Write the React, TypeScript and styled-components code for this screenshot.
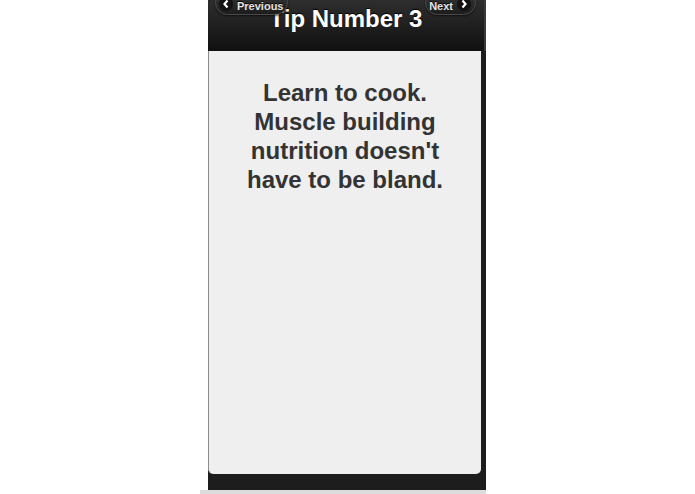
import React from 'react';
import styled, { createGlobalStyle } from 'styled-components';

const Global = createGlobalStyle`
  html, body {
    margin: 0;
    padding: 0;
    background: #ffffff;
    font-family: "Liberation Sans", Arial, sans-serif;
  }
`;

const Page = styled.div`
  width: 695px;
  height: 494px;
  overflow: hidden;
  background: #ffffff;
`;

const Frame = styled.div`
  margin-left: 208px;
  width: 278px;
  background: #1d1d1d;
  display: flex;
  flex-direction: column;
  padding-bottom: 16px;
`;

const Header = styled.header`
  position: relative;
  height: 51px;
  box-sizing: border-box;
  padding-top: 5px;
  background: linear-gradient(#2e2e2e, #101010);
  border-right: 2px solid #3a3a3a;
  overflow: hidden;
`;

const Title = styled.h1`
  margin: 0;
  text-align: center;
  font-size: 24px;
  line-height: 28px;
  font-weight: bold;
  color: #ffffff;
  text-shadow: 0 -1px 1px #000;
`;

const NavButton = styled.div<{ side: 'left' | 'right' }>`
  position: absolute;
  top: -10px;
  ${(p) => (p.side === 'left' ? 'left: 7px;' : 'right: 8px;')}
  height: 25px;
  box-sizing: border-box;
  padding: 9px 4px 0 3px;
  display: flex;
  align-items: flex-start;
  gap: 4px;
  border: 1px solid #4a4a4a;
  border-radius: 14px;
  background: linear-gradient(#3a3a3a, #1c1c1c);
  box-shadow: 0 1px 2px rgba(0, 0, 0, 0.6);
  color: #e6e6e6;
  font-size: 11px;
  font-weight: bold;
  line-height: 12px;
  text-shadow: 0 -1px 0 #000;
`;

const Chevron = styled.span`
  width: 14px;
  height: 14px;
  margin-top: -3px;
  border-radius: 50%;
  background: #121212;
  display: flex;
  align-items: center;
  justify-content: center;
`;

const Content = styled.main`
  height: 423px;
  margin-right: 5px;
  box-sizing: border-box;
  padding: 27px 26px 0 26px;
  background: #efefef;
  border-left: 1px solid #8c8c8c;
  border-radius: 0 0 5px 5px;
`;

const Tip = styled.p`
  margin: 0;
  text-align: center;
  font-size: 24px;
  line-height: 29px;
  font-weight: bold;
  color: #333333;
`;

const Floor = styled.div`
  margin-left: 200px;
  width: 286px;
  height: 4px;
  background: #dcdcdc;
`;

const Arrow = ({ dir }: { dir: 'left' | 'right' }) => (
  <Chevron>
    <svg width="10" height="10" viewBox="0 0 10 10">
      <path
        d={dir === 'left' ? 'M6.5 1.5 L3.5 5 L6.5 8.5' : 'M3.5 1.5 L6.5 5 L3.5 8.5'}
        stroke="#ffffff"
        strokeWidth="2.2"
        fill="none"
      />
    </svg>
  </Chevron>
);

export default function App() {
  return (
    <Page>
      <Global />
      <Frame>
        <Header>
          <Title>Tip Number 3</Title>
          <NavButton side="left">
            <Arrow dir="left" />
            <span>Previous</span>
          </NavButton>
          <NavButton side="right">
            <span>Next</span>
            <Arrow dir="right" />
          </NavButton>
        </Header>
        <Content>
          <Tip>Learn to cook. Muscle building nutrition doesn't have to be bland.</Tip>
        </Content>
      </Frame>
      <Floor />
    </Page>
  );
}
